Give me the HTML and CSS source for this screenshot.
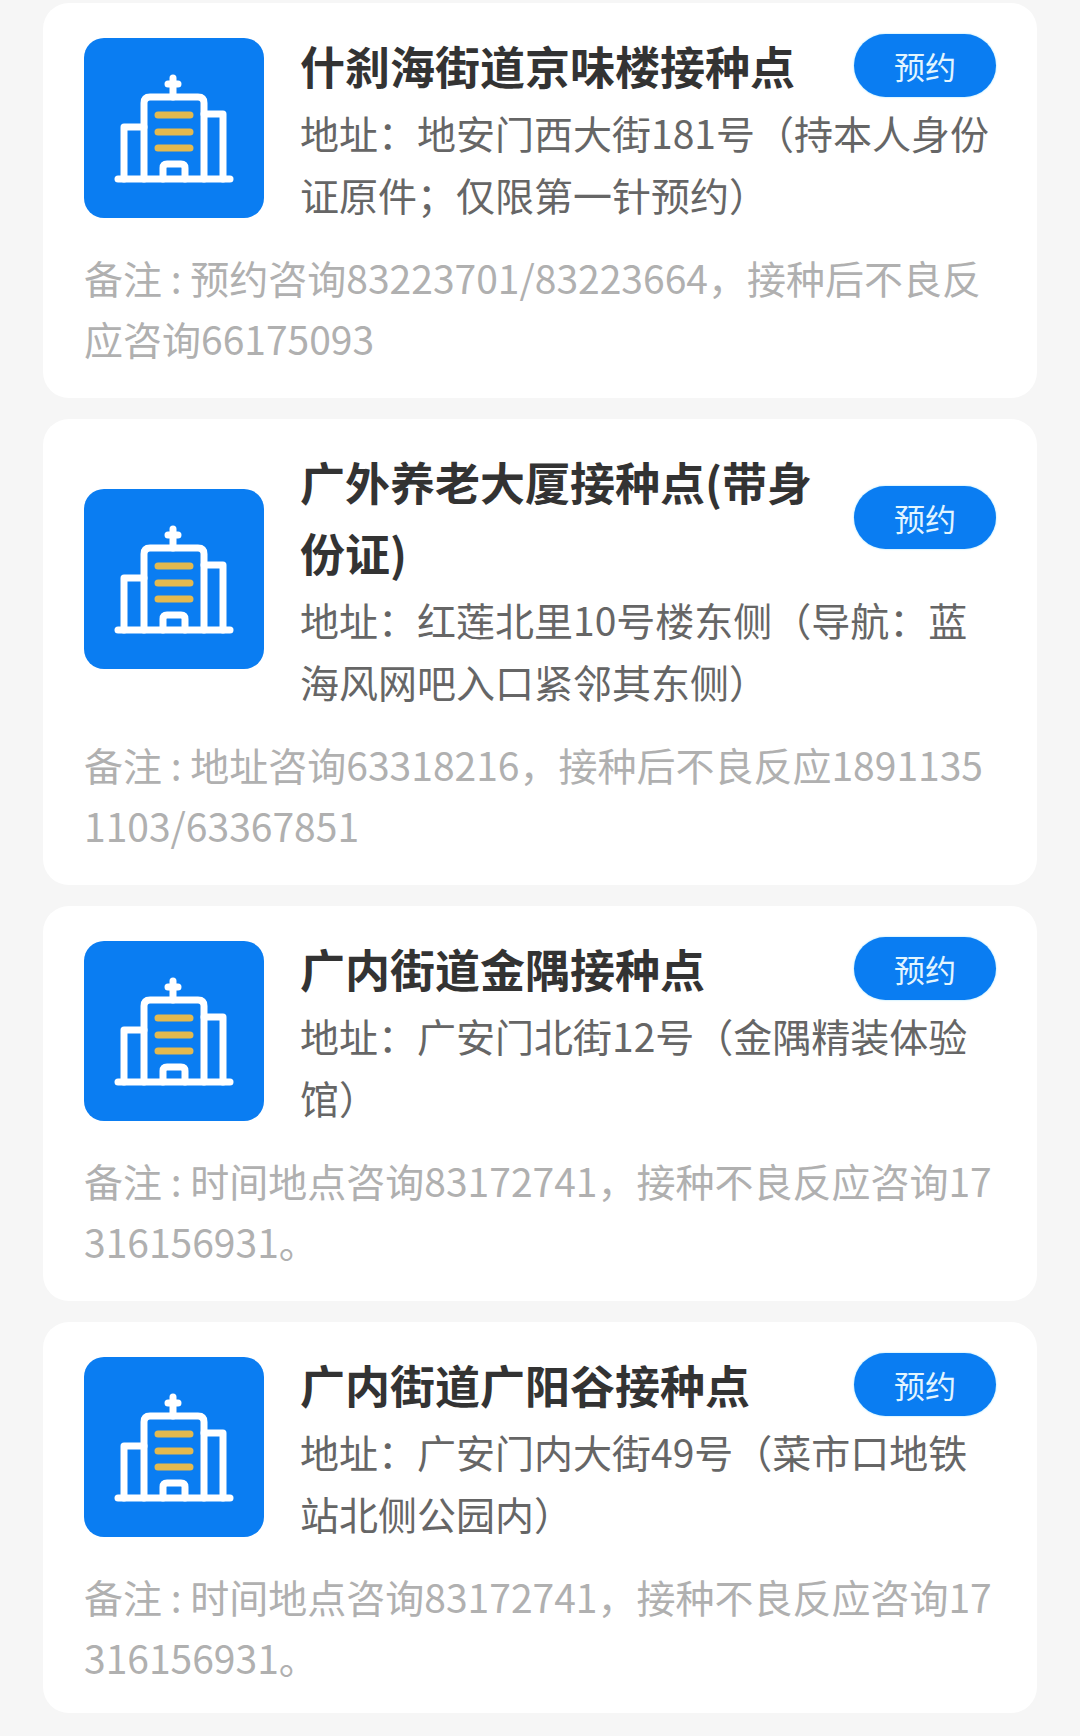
FILE: index.html
```html
<!DOCTYPE html>
<html lang="zh-CN">
<head>
    <meta charset="UTF-8">
    <meta name="viewport" content="width=device-width, initial-scale=1.0">
    <title>接种点列表</title>
    <link rel="stylesheet" href="styles.css">
</head>
<body>
    <svg class="sprite" width="0" height="0">
        <symbol id="hospital" viewBox="0 0 180 180">
            <g fill="none" stroke="#fff" stroke-width="7" stroke-linecap="round" stroke-linejoin="round">
                <path d="M34 141H146"/>
                <path d="M40 141V89H60"/>
                <path d="M60 141V65Q60 59 66 59H114Q120 59 120 65V141"/>
                <path d="M120 76H139V141"/>
                <path d="M79 141V130Q79 126 83 126H97Q101 126 101 130V141"/>
                <path d="M89 40V59M84 46H94"/>
            </g>
            <g fill="none" stroke="#e3b94f" stroke-width="7" stroke-linecap="round">
                <path d="M74 77H106M74 94H106M74 110H106"/>
            </g>
        </symbol>
    </svg>

    <div class="list">
        <div class="card">
            <div class="card-top">
                <svg class="icon"><use href="#hospital"/></svg>
                <div class="info">
                    <div class="title-row">
                        <div class="title">什刹海街道京味楼接种点</div>
                        <button class="book">预约</button>
                    </div>
                    <div class="addr">地址：地安门西大街181号（持本人身份证原件；仅限第一针预约）</div>
                </div>
            </div>
            <div class="note">备注 : 预约咨询83223701/83223664，接种后不良反应咨询66175093</div>
        </div>

        <div class="card">
            <div class="card-top">
                <svg class="icon"><use href="#hospital"/></svg>
                <div class="info">
                    <div class="title-row">
                        <div class="title">广外养老大厦接种点(带身份证)</div>
                        <button class="book">预约</button>
                    </div>
                    <div class="addr">地址：红莲北里10号楼东侧（导航：蓝海风网吧入口紧邻其东侧）</div>
                </div>
            </div>
            <div class="note">备注 : 地址咨询63318216，接种后不良反应18911351103/63367851</div>
        </div>

        <div class="card">
            <div class="card-top">
                <svg class="icon"><use href="#hospital"/></svg>
                <div class="info">
                    <div class="title-row">
                        <div class="title">广内街道金隅接种点</div>
                        <button class="book">预约</button>
                    </div>
                    <div class="addr">地址：广安门北街12号（金隅精装体验馆）</div>
                </div>
            </div>
            <div class="note">备注 : 时间地点咨询83172741，接种不良反应咨询17316156931。</div>
        </div>

        <div class="card">
            <div class="card-top">
                <svg class="icon"><use href="#hospital"/></svg>
                <div class="info">
                    <div class="title-row">
                        <div class="title">广内街道广阳谷接种点</div>
                        <button class="book">预约</button>
                    </div>
                    <div class="addr">地址：广安门内大街49号（菜市口地铁站北侧公园内）</div>
                </div>
            </div>
            <div class="note">备注 : 时间地点咨询83172741，接种不良反应咨询17316156931。</div>
        </div>
    </div>
</body>
</html>
```

FILE: styles.css
```css
body {
    margin: 0;
    background-color: #f6f6f6;
    font-family: "Noto Sans CJK SC", "Noto Sans", sans-serif;
}

.sprite {
    display: block;
}

.list {
    display: flex;
    flex-direction: column;
    gap: 21px;
    padding: 3px 43px 0;
}

.card {
    padding: 27px 41px 29px;
    border-radius: 26px;
    background-color: #fff;
}

.card:last-child {
    padding-bottom: 25px;
}

.card-top {
    display: flex;
    align-items: center;
    gap: 36px;
}

.icon {
    flex: none;
    width: 180px;
    height: 180px;
    border-radius: 20px;
    background-color: #0a7df2;
}

.info {
    flex: 1;
    min-width: 0;
}

.title-row {
    display: flex;
    align-items: center;
    justify-content: space-between;
    gap: 28px;
}

.title {
    font-size: 45px;
    font-weight: 700;
    line-height: 71px;
    color: #333;
}

.book {
    flex: none;
    width: 142px;
    height: 63px;
    padding: 0;
    border: none;
    border-radius: 32px;
    background-color: #0a7df2;
    box-shadow: 0 0 2px #8fdcff;
    font-family: inherit;
    font-size: 31px;
    color: #e2f5ff;
}

.addr {
    font-size: 39px;
    line-height: 62px;
    color: #666;
    word-break: break-all;
}

.note {
    margin-top: 22px;
    font-size: 39px;
    line-height: 61px;
    color: #b0b0b0;
    word-break: break-all;
}
```
